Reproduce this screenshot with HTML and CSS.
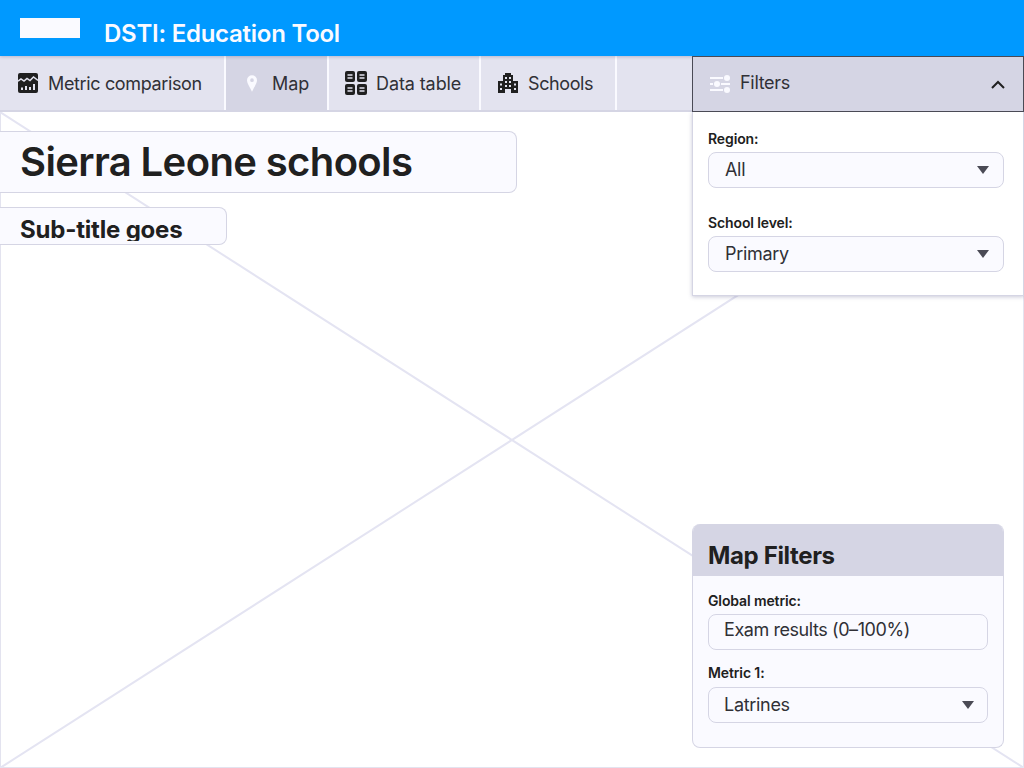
FILE: index.html
```html
<!DOCTYPE html>
<html lang="en">
<head>
<meta charset="utf-8">
<title>DSTI: Education Tool</title>
<link rel="stylesheet" href="styles.css">
</head>
<body>
<header class="topbar">
  <div class="logo"></div>
  <div class="app-title">DSTI: Education Tool</div>
</header>
<nav class="navbar">
  <a class="tab tab-metric">
    <svg class="icon" viewBox="0 0 20 20"><rect width="20" height="20" rx="2" fill="#202020"/><path d="M0 8.200 3 6l3 2 3-2.600 3 2.200L15.500 4 20 7.400" fill="none" stroke="#e3e3ef" stroke-width="1.500"/><path d="M4 17v-2.500M8 17v-4M12 17v-3M16 17v-6" stroke="#e3e3ef" stroke-width="2"/></svg>
    <span>Metric comparison</span>
  </a>
  <a class="tab tab-map active">
    <svg class="icon pin" viewBox="0 0 12 20"><path fill-rule="evenodd" d="M6 0a6 6 0 0 1 6 6c0 4-4 9-6 14C4 15 0 10 0 6a6 6 0 0 1 6-6Zm0 3.800a2.200 2.200 0 1 0 0 4.400 2.200 2.200 0 0 0 0-4.400Z" fill="#fafaff"/></svg>
    <span>Map</span>
  </a>
  <a class="tab tab-table">
    <svg class="icon wide" viewBox="0 0 22 24"><g fill="#202020"><rect width="10" height="11" rx="2"/><rect x="12" width="10" height="11" rx="2"/><rect y="13" width="10" height="11" rx="2"/><rect x="12" y="13" width="10" height="11" rx="2"/></g><path d="M2.500 4h5M2.500 7h5M14.500 4h5M14.500 7h5M2.500 17h5M2.500 20h5M14.500 17h5M14.500 20h5" stroke="#e3e3ef" stroke-width="1.500"/></svg>
    <span>Data table</span>
  </a>
  <a class="tab tab-schools">
    <svg class="icon" viewBox="0 0 20 20"><path fill-rule="evenodd" d="M7 0h6v2h2v6h5v12h-7v-4H7v4H0V8h5V2h2V0Zm0 4v2h2V4H7Zm4 0v2h2V4h-2ZM7 8v2h2V8H7Zm4 0v2h2V8h-2Zm-9 2.500v2h2v-2H2Zm14 0v2h2v-2h-2ZM7 12v2h2v-2H7Zm4 0v2h2v-2h-2Zm-9 3v2h2v-2H2Zm14 0v2h2v-2h-2Z" fill="#202020"/></svg>
    <span>Schools</span>
  </a>
  <div class="filters-head">
    <svg class="icon" viewBox="0 0 20 18"><g fill="#fafaff"><rect y="2" width="13" height="2"/><circle cx="17" cy="3" r="3"/><rect y="8" width="3" height="2"/><circle cx="7" cy="9" r="3"/><rect x="11" y="8" width="9" height="2"/><rect y="14" width="13" height="2"/><circle cx="17" cy="15" r="3"/></g></svg>
    <span class="filters-label">Filters</span>
    <svg class="chevron" viewBox="0 0 14 9"><path d="M1 8l6-6 6 6" fill="none" stroke="#202020" stroke-width="2"/></svg>
  </div>
</nav>
<main class="map">
  <svg class="cross" viewBox="0 0 1024 656" preserveAspectRatio="none">
    <line x1="0" y1="0" x2="1024" y2="656"/>
    <line x1="0" y1="656" x2="1024" y2="0"/>
  </svg>
  <div class="titles">
    <h1 class="title">Sierra Leone schools</h1>
    <h2 class="subtitle"><span class="subtitle-clip">Sub-title goes</span></h2>
  </div>
  <section class="filters-panel">
    <div class="field">
      <label class="label">Region:</label>
      <div class="select"><span>All</span><i class="caret"></i></div>
    </div>
    <div class="field">
      <label class="label">School level:</label>
      <div class="select"><span>Primary</span><i class="caret"></i></div>
    </div>
  </section>
  <section class="map-card">
    <div class="card-head">Map Filters</div>
    <div class="card-body">
      <div class="field">
        <label class="label">Global metric:</label>
        <div class="select"><span class="raised">Exam results (0–100%)</span></div>
      </div>
      <div class="field">
        <label class="label label-loose">Metric 1:</label>
        <div class="select"><span>Latrines</span><i class="caret"></i></div>
      </div>
    </div>
  </section>
</main>
</body>
</html>
```
FILE: styles.css
```css
* { box-sizing: border-box; }
html, body { margin: 0; height: 100%; }
body {
  font-family: Inter, "Liberation Sans", sans-serif;
  color: #202020;
  background: #fff;
  display: flex;
  flex-direction: column;
  width: 1024px;
  height: 768px;
  overflow: hidden;
}
.topbar {
  position: relative;
  z-index: 2;
  height: 56px;
  flex: none;
  background: #0099ff;
  box-shadow: 0 1px 3px rgba(60, 60, 110, .25);
  display: flex;
  align-items: flex-start;
  padding: 18px 0 0 20px;
  gap: 24px;
}
.logo { width: 60px; height: 20px; background: #fafaff; }
.app-title {
  color: #fafaff;
  font-size: 24px;
  font-weight: 600;
  line-height: 32px;
  letter-spacing: -.25px;
}
.navbar {
  height: 56px;
  flex: none;
  display: flex;
  background: #e3e3ef;
  border-bottom: 2px solid #d5d5e4;
  font-size: 18px;
  color: #303036;
}
.tab {
  display: flex;
  align-items: center;
  height: 54px;
  border-right: 2px solid #fafaff;
  padding-left: 18px;
  gap: 10px;
}
.tab-metric { width: 226px; letter-spacing: -.36px; }
.tab-map { width: 103px; padding-left: 21px; gap: 15px; }
.tab-table { width: 152px; padding-left: 16px; gap: 9px; letter-spacing: -.1px; }
.tab-schools { width: 136px; padding-left: 17px; gap: 10px; letter-spacing: -.4px; }
.active { background: #d5d5e4; }
.icon { width: 20px; height: 20px; flex: none; }
.pin { width: 10px; height: 17px; }
.wide { width: 22px; height: 24px; }
.filters-head {
  position: relative;
  z-index: 3;
  margin-left: auto;
  width: 332px;
  height: 56px;
  background: #d5d5e4;
  border: 1px solid #4a4a55;
  display: flex;
  align-items: center;
  padding: 0 18px 0 17px;
  gap: 10px;
}
.filters-label { flex: 1; margin-top: -4px; letter-spacing: -.3px; }
.chevron { width: 14px; height: 9px; }
.map {
  position: relative;
  flex: 1;
  border: 1px solid #e3e3ef;
  border-top: 0;
}
.cross {
  position: absolute;
  left: -1px;
  top: 0;
  width: 1024px;
  height: 656px;
}
.cross line { stroke: #e4e4f2; stroke-width: 2; }
.titles { position: absolute; left: -1px; top: 19px; }
.title {
  margin: 0;
  width: 517px;
  height: 62px;
  padding-left: 20px;
  font-size: 40px;
  font-weight: 600;
  line-height: 60px;
  letter-spacing: -.62px;
  background: #fafaff;
  border: 1px solid #d5d5e4;
  border-left: 0;
  border-radius: 0 8px 8px 0;
}
.subtitle {
  margin: 14px 0 0;
  width: 227px;
  height: 38px;
  padding-left: 20px;
  font-size: 24px;
  font-weight: 700;
  line-height: 44px;
  letter-spacing: -.2px;
  background: #fafaff;
  border: 1px solid #d5d5e4;
  border-left: 0;
  border-radius: 0 8px 8px 0;
}
.subtitle-clip {
  display: block;
  height: 33px;
  overflow: hidden;
}
.filters-panel {
  position: absolute;
  right: -1px;
  top: 0;
  width: 332px;
  height: 184px;
  background: #fff;
  border: 1px solid #d5d5e4;
  border-top: 0;
  box-shadow: 0 1px 4px rgba(80, 80, 130, .3);
  padding: 18px 19px 0 15px;
  display: flex;
  flex-direction: column;
  gap: 26px;
}
.label {
  display: block;
  font-size: 14px;
  font-weight: 600;
  line-height: 18px;
  letter-spacing: -.12px;
  margin-bottom: 4px;
}
.label-loose { margin-bottom: 5px; }
.select {
  height: 36px;
  background: #fafaff;
  border: 1px solid #d5d5e4;
  border-radius: 8px;
  font-size: 18px;
  line-height: 34px;
  letter-spacing: -.3px;
  padding: 0 20px 0 16px;
  display: flex;
  justify-content: space-between;
  align-items: center;
  color: #303036;
}
.raised { margin-top: -4px; letter-spacing: -.43px; }
.caret {
  width: 0;
  height: 0;
  border-left: 6.500px solid transparent;
  border-right: 6.500px solid transparent;
  border-top: 8px solid #4a4a55;
  margin-right: -6px;
}
.map-card {
  position: absolute;
  right: 19px;
  bottom: 19px;
  width: 312px;
  height: 224px;
  background: #fafaff;
  border: 1px solid #d5d5e4;
  border-top: 0;
  border-radius: 8px;
  overflow: hidden;
}
.map-card .select { padding-left: 15px; }
.map-card .caret { margin-right: -7px; }
.card-head {
  height: 52px;
  background: #d5d5e4;
  font-size: 24px;
  font-weight: 700;
  line-height: 64px;
  letter-spacing: -.36px;
  margin: 0 -1px;
  padding-left: 16px;
}
.card-body {
  padding: 16px 15px 0;
  display: flex;
  flex-direction: column;
  gap: 14px;
}
```
